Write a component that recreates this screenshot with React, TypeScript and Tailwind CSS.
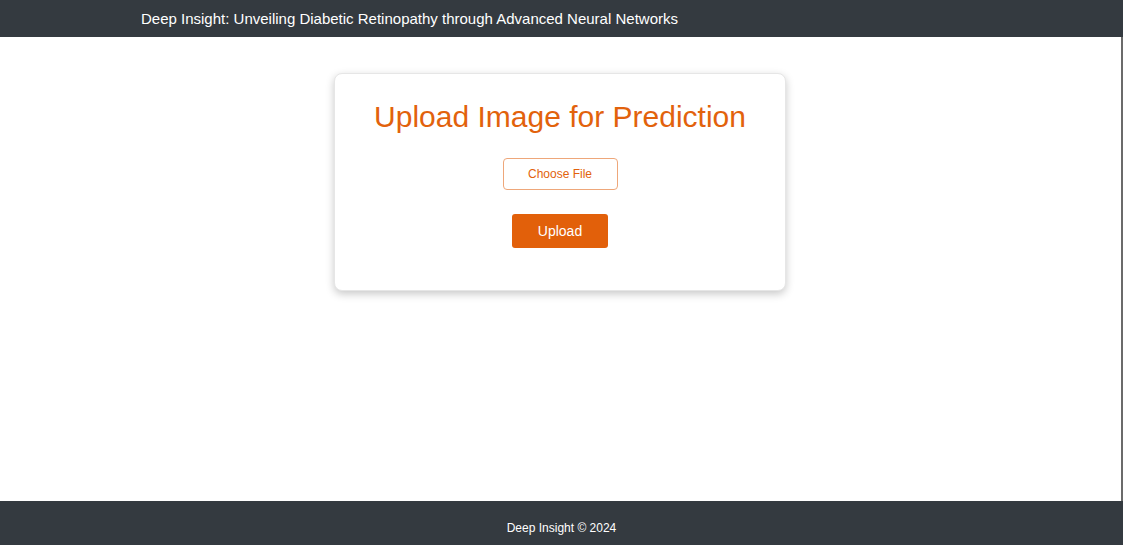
const App: React.FC = () => {
  return (
    <div className="flex flex-col h-[545px] w-full bg-white font-['Liberation_Sans',Arial,sans-serif]">
      <header className="h-[37px] shrink-0 bg-[#343a40] flex items-center pl-[141px]">
        <p className="text-white text-[15px] leading-none">
          Deep Insight: Unveiling Diabetic Retinopathy through Advanced Neural Networks
        </p>
      </header>

      <main className="flex-1 flex justify-center pt-[36px] border-r-2 border-[#6b6b6b]">
        <div className="ml-[-1px] w-[452px] h-[218px] rounded-[8px] bg-white shadow-[0_3px_8px_rgba(0,0,0,0.22)] border border-[#e6e6e6] flex flex-col items-center pt-[25px]">
          <h1 className="text-[30px] leading-[36px] text-[#e2620c]">Upload Image for Prediction</h1>
          <button className="mt-[23px] w-[115px] h-[32px] rounded-[4px] border border-[#eea77a] text-[#e2620c] text-[12px] bg-white">
            Choose File
          </button>
          <button className="mt-[24px] w-[96px] h-[34px] rounded-[3px] bg-[#e2600a] text-white text-[14px]">
            Upload
          </button>
        </div>
      </main>

      <footer className="h-[44px] shrink-0 bg-[#343a40] flex items-center justify-center pt-[10px]">
        <p className="text-white text-[12px]">Deep Insight © 2024</p>
      </footer>
    </div>
  );
};

export default App;
